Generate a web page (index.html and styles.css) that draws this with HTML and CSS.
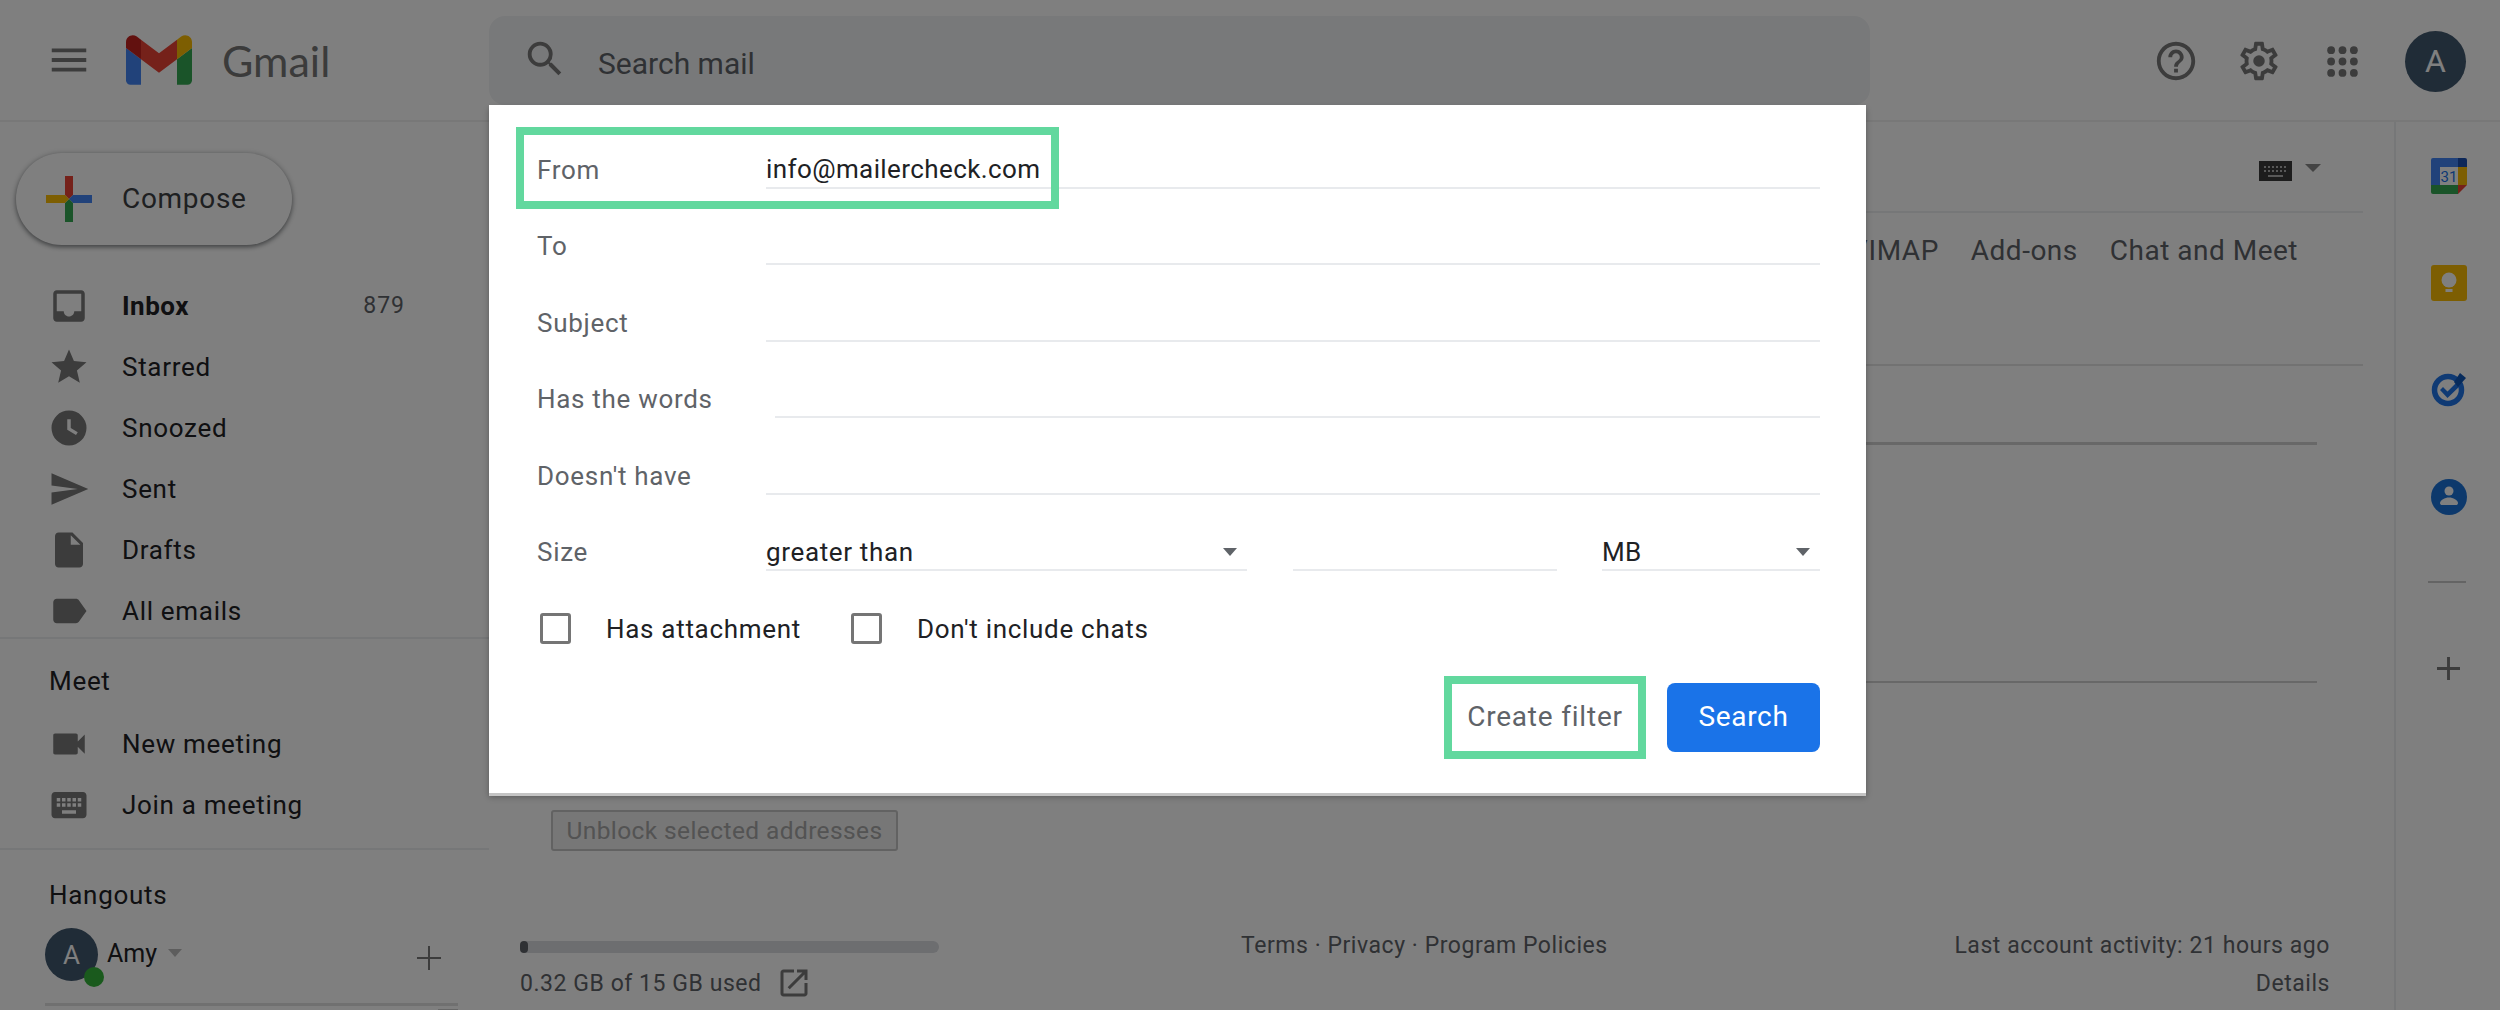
FILE: index.html
```html
<!DOCTYPE html>
<html lang="en">
<head>
<meta charset="utf-8">
<title>Gmail</title>
<link rel="stylesheet" href="styles.css">
</head>
<body>
<div class="app">
  <header class="topbar">
    <div class="brand">
      <svg class="ic ic-menu" viewBox="0 0 24 24"><path d="M3 18h18v-2H3v2zm0-5h18v-2H3v2zm0-7v2h18V6H3z"/></svg>
      <svg class="logo" viewBox="52 42 88 66"><path fill="#4285f4" d="M58 108h14V74L52 59v43c0 3.32 2.69 6 6 6"/><path fill="#34a853" d="M120 108h14c3.32 0 6-2.69 6-6V59l-20 15"/><path fill="#fbbc04" d="M120 48v26l20-15v-8c0-7.42-8.47-11.65-14.4-7.2"/><path fill="#ea4335" d="M72 74V48l24 18 24-18v26L96 92"/><path fill="#c5221f" d="M52 51v8l20 15V48l-5.6-4.2c-5.94-4.45-14.4-.22-14.4 7.2"/></svg>
      <span class="wordmark">Gmail</span>
    </div>
    <div class="searchbar">
      <svg class="ic ic-search" viewBox="0 0 24 24"><path d="M15.5 14h-.79l-.28-.27A6.471 6.471 0 0 0 16 9.5 6.5 6.5 0 1 0 9.5 16c1.61 0 3.09-.59 4.23-1.57l.27.28v.79l5 4.99L20.49 19l-4.99-5zm-6 0C7.01 14 5 11.99 5 9.5S7.01 5 9.5 5 14 7.01 14 9.5 11.99 14 9.5 14z"/></svg>
      <span>Search mail</span>
    </div>
    <div class="top-actions">
      <svg class="ic ic-top" viewBox="0 0 24 24"><path d="M11 18h2v-2h-2v2zm1-16C6.48 2 2 6.48 2 12s4.48 10 10 10 10-4.48 10-10S17.52 2 12 2zm0 18c-4.41 0-8-3.59-8-8s3.59-8 8-8 8 3.59 8 8-3.59 8-8 8zm0-14c-2.21 0-4 1.79-4 4h2c0-1.1.9-2 2-2s2 .9 2 2c0 2-3 1.75-3 5h2c0-2.25 3-2.5 3-5 0-2.21-1.79-4-4-4z"/></svg>
      <svg class="ic ic-top" viewBox="0 0 24 24"><path d="M19.43 12.98c.04-.32.07-.64.07-.98 0-.34-.03-.66-.07-.98l2.11-1.65c.19-.15.24-.42.12-.64l-2-3.46c-.09-.16-.26-.25-.44-.25-.06 0-.12.01-.17.03l-2.49 1c-.52-.4-1.08-.73-1.69-.98l-.38-2.65C14.46 2.18 14.25 2 14 2h-4c-.25 0-.46.18-.49.42l-.38 2.65c-.61.25-1.17.59-1.69.98l-2.49-1c-.06-.02-.12-.03-.18-.03-.17 0-.34.09-.43.25l-2 3.46c-.13.22-.07.49.12.64l2.11 1.65c-.04.32-.07.65-.07.98 0 .33.03.66.07.98l-2.11 1.65c-.19.15-.24.42-.12.64l2 3.46c.09.16.26.25.44.25.06 0 .12-.01.17-.03l2.49-1c.52.4 1.08.73 1.69.98l.38 2.65c.03.24.24.42.49.42h4c.25 0 .46-.18.49-.42l.38-2.65c.61-.25 1.17-.59 1.69-.98l2.49 1c.06.02.12.03.18.03.17 0 .34-.09.43-.25l2-3.46c.12-.22.07-.49-.12-.64l-2.11-1.65zm-1.98-1.71c.04.31.05.52.05.73 0 .21-.02.43-.05.73l-.14 1.13.89.7 1.08.84-.7 1.21-1.27-.51-1.04-.42-.9.68c-.43.32-.84.56-1.25.73l-1.06.43-.16 1.13-.2 1.35h-1.4l-.19-1.35-.16-1.13-1.06-.43c-.43-.18-.83-.41-1.23-.71l-.91-.7-1.06.43-1.27.51-.7-1.21 1.08-.84.89-.7-.14-1.13c-.03-.31-.05-.54-.05-.74s.02-.43.05-.73l.14-1.13-.89-.7-1.08-.84.7-1.21 1.27.51 1.04.42.9-.68c.43-.32.84-.56 1.25-.73l1.06-.43.16-1.13.2-1.35h1.39l.19 1.35.16 1.13 1.06.43c.43.18.83.41 1.23.71l.91.7 1.06-.43 1.27-.51.7 1.21-1.07.85-.89.7.14 1.13z"/><circle cx="12" cy="12" r="3"/></svg>
      <svg class="ic ic-top" viewBox="0 0 24 24"><circle cx="5" cy="5" r="2.4"/><circle cx="12" cy="5" r="2.4"/><circle cx="19" cy="5" r="2.4"/><circle cx="5" cy="12" r="2.4"/><circle cx="12" cy="12" r="2.4"/><circle cx="19" cy="12" r="2.4"/><circle cx="5" cy="19" r="2.4"/><circle cx="12" cy="19" r="2.4"/><circle cx="19" cy="19" r="2.4"/></svg>
      <span class="avatar avatar-top">A</span>
    </div>
  </header>

  <div class="body-row">
    <aside class="sidebar">
      <button class="compose">
        <svg class="compose-plus" viewBox="0 0 46 46"><path fill="#ea4335" d="M19 0h8v19l-4 4-4-4z"/><path fill="#4285f4" d="M46 19v8H27l-4-4 4-4z"/><path fill="#34a853" d="M27 46h-8V27l4-4 4 4z"/><path fill="#fbbc04" d="M0 27v-8h19l4 4-4 4z"/></svg>
        <span class="compose-text">Compose</span>
      </button>
      <nav class="labels">
        <a class="nav-item nav-active"><svg class="ic ic-nav" viewBox="0 0 24 24"><path d="M19 3H5c-1.1 0-2 .9-2 2v14c0 1.1.9 2 2 2h14c1.1 0 2-.9 2-2V5c0-1.1-.9-2-2-2zm0 12h-4c0 1.66-1.34 3-3 3s-3-1.34-3-3H5V5h14v10z"/></svg><span class="nav-text">Inbox</span><span class="count">879</span></a>
        <a class="nav-item"><svg class="ic ic-nav" viewBox="0 0 24 24"><path d="M12 17.27L18.18 21l-1.64-7.03L22 9.24l-7.19-.61L12 2 9.19 8.63 2 9.24l5.46 4.73L5.82 21z"/></svg><span class="nav-text">Starred</span></a>
        <a class="nav-item"><svg class="ic ic-nav" viewBox="0 0 24 24"><path fill-rule="evenodd" d="M12 2a10 10 0 1 0 0 20 10 10 0 0 0 0-20zm-1 5h2v5l4 2.4-1 1.6-5-3z"/></svg><span class="nav-text">Snoozed</span></a>
        <a class="nav-item"><svg class="ic ic-nav" viewBox="0 0 24 24"><path d="M2.01 21L23 12 2.01 3 2 10l15 2-15 2z"/></svg><span class="nav-text">Sent</span></a>
        <a class="nav-item"><svg class="ic ic-nav" viewBox="0 0 24 24"><path d="M6 2c-1.1 0-1.99.9-1.99 2L4 20c0 1.1.89 2 1.99 2H18c1.1 0 2-.9 2-2V8l-6-6H6zm7 7V3.5L18.5 9H13z"/></svg><span class="nav-text">Drafts</span></a>
        <a class="nav-item"><svg class="ic ic-nav" viewBox="0 0 24 24"><path d="M17.63 5.84C17.27 5.33 16.67 5 16 5L5 5.01C3.9 5.01 3 5.9 3 7v10c0 1.1.9 1.99 2 1.99L16 19c.67 0 1.27-.33 1.63-.84L22 12l-4.37-6.16z"/></svg><span class="nav-text">All emails</span></a>
      </nav>
      <section class="meet">
        <div class="side-title">Meet</div>
        <a class="nav-item"><svg class="ic ic-nav" viewBox="0 0 24 24"><path d="M17 10.5V7c0-.55-.45-1-1-1H4c-.55 0-1 .45-1 1v10c0 .55.45 1 1 1h12c.55 0 1-.45 1-1v-3.5l4 4v-11l-4 4z"/></svg><span class="nav-text">New meeting</span></a>
        <a class="nav-item"><svg class="ic ic-nav" viewBox="0 0 24 24"><path d="M20 4.5H4c-1.1 0-1.99.9-1.99 2L2 17.5c0 1.1.9 2 2 2h16c1.1 0 2-.9 2-2v-11c0-1.1-.9-2-2-2zM11 8h2v2h-2V8zm0 3h2v2h-2v-2zM8 8h2v2H8V8zm0 3h2v2H8v-2zm-1 2H5v-2h2v2zm0-3H5V8h2v2zm9 7H8v-2h8v2zm0-4h-2v-2h2v2zm0-3h-2V8h2v2zm3 3h-2v-2h2v2zm0-3h-2V8h2v2z"/></svg><span class="nav-text">Join a meeting</span></a>
      </section>
      <section class="hangouts">
        <div class="side-title">Hangouts</div>
        <div class="chat-user">
          <span class="avatar avatar-side">A<i class="online"></i></span>
          <span class="chat-name">Amy</span>
          <i class="caret caret-light"></i>
          <svg class="ic ic-plus" viewBox="0 0 24 24"><path d="M13 0h-2v11H0v2h11v11h2V13h11v-2H13z"/></svg>
        </div>
        <div class="chat-list"><i class="thumb"></i></div>
      </section>
    </aside>

    <main class="content">
      <div class="toolbar">
        <svg class="kbd" viewBox="0 0 33 20"><path d="M0 0h33v20H0z"/><path fill="#fff" opacity=".6" d="M5 5h2v2H5zM9 5h2v2H9zM13 5h2v2h-2zM17 5h2v2h-2zM21 5h2v2h-2zM25 5h2v2h-2zM5 9h2v2H5zM9 9h2v2H9zM13 9h2v2h-2zM17 9h2v2h-2zM21 9h2v2h-2zM25 9h2v2h-2zM9 14h15v2H9z"/></svg>
        <i class="caret"></i>
      </div>
      <nav class="tabs">
        <span>POP/IMAP</span><span>Add-ons</span><span>Chat and Meet</span>
      </nav>
      <div class="rule-block"></div>
      <div class="rule-block rule-tall"></div>
      <button class="unblock">Unblock selected addresses</button>
      <footer class="page-foot">
        <div class="storage">
          <div class="meter"><i class="meter-fill"></i></div>
          <div class="storage-text">0.32 GB of 15 GB used
            <svg class="ic ic-open" viewBox="0 0 24 24"><path d="M19 19H5V5h7V3H5c-1.11 0-2 .9-2 2v14c0 1.1.89 2 2 2h14c1.1 0 2-.9 2-2v-7h-2v7zM14 3v2h3.59l-9.83 9.83 1.41 1.41L19 6.41V10h2V3h-7z"/></svg>
          </div>
        </div>
        <div class="terms">Terms · Privacy · Program Policies</div>
        <div class="activity"><div>Last account activity: 21 hours ago</div><div class="details">Details</div></div>
      </footer>
    </main>

    <aside class="rail">
      <svg class="app-ic app-cal" viewBox="0 0 36 36">
        <path fill="#fff" d="M9 9h18v18H9z"/>
        <path fill="#4285f4" d="M2 0h25v9H9v18H0V2a2 2 0 0 1 2-2z"/>
        <path fill="#1a4fb0" d="M27 0h7a2 2 0 0 1 2 2v7h-9z"/>
        <path fill="#fbbc04" d="M27 9h9v18h-9z"/>
        <path fill="#34a853" d="M0 27h27v9H2a2 2 0 0 1-2-2z"/>
        <path fill="#ea4335" d="M27 27h9l-9 9z"/>
        <text class="cal-num" x="18" y="24" text-anchor="middle">31</text>
      </svg>
      <svg class="app-ic app-keep" viewBox="0 0 36 36"><rect width="36" height="36" rx="3" fill="#fbbc04"/><circle cx="18" cy="15" r="7.5" fill="#fff"/><path fill="#fff" d="M14.5 17h7v5h-7zM14.5 24h7v3h-7z"/></svg>
      <svg class="app-ic app-tasks" viewBox="0 0 36 36"><circle cx="17" cy="18" r="13.5" fill="none" stroke="#1f74e8" stroke-width="5.500"/><path fill="#1f74e8" d="M9 18l3-3 4.500 4.500L28 8l3.500 3.500L16.500 26z"/><path fill="#0f56b8" d="M29 1l6 5-8 9-4-5z"/></svg>
      <svg class="app-ic app-contacts" viewBox="0 0 36 36"><circle cx="18" cy="18" r="18" fill="#1a73d8"/><circle cx="18" cy="12" r="4.5" fill="#fff"/><path fill="#fff" d="M9 24c0-3 5-5.5 9-5.5s9 2.500 9 5.500c0 1.500-1 2-2 2H11c-1 0-2-.5-2-2z"/></svg>
      <i class="rail-rule"></i>
      <svg class="ic rail-plus" viewBox="0 0 24 24"><path d="M13.500 0h-3v10.500H0v3h10.500V24h3V13.500H24v-3H13.500z"/></svg>
    </aside>
  </div>
</div>

<div class="scrim"></div>

<form class="dialog">
  <div class="row"><span class="lbl">From</span><span class="field">info@mailercheck.com</span></div>
  <div class="row"><span class="lbl">To</span><span class="field"></span></div>
  <div class="row"><span class="lbl">Subject</span><span class="field"></span></div>
  <div class="row"><span class="lbl lbl-wide">Has the words</span><span class="field"></span></div>
  <div class="row"><span class="lbl">Doesn't have</span><span class="field"></span></div>
  <div class="row">
    <span class="lbl">Size</span>
    <span class="field select select-size">greater than<i class="caret caret-dark"></i></span>
    <span class="field field-num"></span>
    <span class="field select select-unit">MB<i class="caret caret-dark"></i></span>
  </div>
  <div class="row row-checks">
    <label class="check"><i class="box"></i>Has attachment</label>
    <label class="check"><i class="box"></i>Don't include chats</label>
  </div>
  <div class="actions">
    <span class="btn-create"><span class="btn-label">Create filter</span></span>
    <span class="btn-search"><span class="btn-label">Search</span></span>
  </div>
  <div class="highlight"></div>
</form>
</body>
</html>
```

FILE: styles.css
```css
* { box-sizing: border-box; }
html, body { margin: 0; height: 100%; }
body { width: 2500px; height: 1010px; overflow: hidden; background: #fff; font-family: Roboto, "Liberation Sans", sans-serif; color: #202124; position: relative; }
.ic { fill: #787878; display: block; flex: none; }

.app { width: 2500px; height: 1010px; display: flex; flex-direction: column; }

/* top bar */
.topbar { height: 122px; flex: none; display: flex; border-bottom: 2px solid #f1f1f1; }
.brand { width: 489px; flex: none; display: flex; align-items: center; padding: 0 0 0 46px; }
.ic-menu { width: 46px; height: 46px; }
.logo { width: 66px; height: 50px; margin-left: 34px; }
.wordmark { font-family: Lato, sans-serif; font-size: 43px; color: #777; margin-left: 30px; }
.searchbar { width: 1381px; height: 89px; margin-top: 16px; background: #f1f3f4; border-radius: 16px; display: flex; align-items: center; padding: 0 0 0 33px; font-size: 30px; color: #5f6368; }
.ic-search { width: 46px; height: 46px; margin-right: 30px; margin-top: -4px; }
.searchbar span { margin-top: 6px; }
.top-actions { flex: 1; display: flex; align-items: center; padding: 2px 0 0 283px; }
.ic-top { width: 46px; height: 46px; margin-right: 37px; }
.ic-top:nth-child(3) { width: 39px; height: 39px; margin-left: 4px; margin-right: 43px; }
.avatar { display: flex; align-items: center; justify-content: center; border-radius: 50%; background: #41586e; color: #fff; position: relative; }
.avatar-top { width: 61px; height: 61px; font-size: 32px; }

/* layout */
.body-row { flex: 1; display: flex; min-height: 0; }
.sidebar { width: 489px; flex: none; padding-top: 31px; display: flex; flex-direction: column; }

.compose { width: 276px; height: 92px; margin-left: 16px; border: 0; border-radius: 46px; background: #fff; display: flex; align-items: center; padding: 0 0 0 30px; box-shadow: 0 2px 4px rgba(60,64,67,.5), 0 1px 6px rgba(60,64,67,.3); font: 400 28px Roboto, sans-serif; color: #3c4043; letter-spacing: .7px; flex: none; }
.compose-plus { width: 46px; height: 46px; margin-right: 30px; flex: none; }
.compose-text { margin-top: -2px; }

.labels { height: 394px; padding-top: 30px; overflow: hidden; border-bottom: 2px solid #eceff0; flex: none; }
.nav-item { height: 61px; display: flex; align-items: center; font-size: 26px; letter-spacing: .7px; color: #202124; padding-left: 48px; }
.ic-nav { width: 42px; height: 42px; margin-right: 32px; }
.nav-active { font-weight: 700; letter-spacing: .5px; }
.nav-text { flex: 1; }
.count { font-weight: 400; font-size: 23px; color: #5f6368; margin-right: 84px; letter-spacing: 1px; }

.side-title { font-size: 26px; letter-spacing: .7px; color: #202124; padding-left: 49px; }
.meet { height: 211px; flex: none; padding-top: 26px; border-bottom: 2px solid #eceff0; }
.meet .side-title { height: 48px; line-height: 32px; }
.hangouts { padding-top: 29px; }
.hangouts .side-title { height: 49px; line-height: 32px; }
.chat-user { display: flex; align-items: center; padding-left: 45px; height: 53px; }
.avatar-side { width: 53px; height: 53px; font-size: 26px; flex: none; }
.online { position: absolute; left: 39px; top: 39px; width: 20px; height: 20px; border-radius: 50%; background: #34b53a; }
.chat-name { font-size: 25px; margin-left: 9px; margin-top: -2px; }
.caret { display: block; width: 0; height: 0; border-left: 8px solid transparent; border-right: 8px solid transparent; border-top: 8px solid #888; }
.caret-light { margin-left: 11px; margin-top: -3px; border-top-color: #bbb; border-left-width: 7px; border-right-width: 7px; }
.ic-plus { width: 24px; height: 24px; margin-left: 235px; margin-top: 6px; }
.chat-list { margin: 22px 31px 0 45px; height: 8px; border-top: 3px solid #e0e0e0; display: flex; justify-content: flex-end; }
.thumb { width: 20px; height: 8px; margin-top: 3px; background: #ccc; display: block; }

/* main */
.content { flex: 1; min-width: 0; display: flex; flex-direction: column; overflow: hidden; }
.toolbar { height: 91px; flex: none; margin-right: 31px; border-bottom: 2px solid #eceff0; display: flex; justify-content: flex-end; align-items: flex-start; padding: 39px 42px 0 0; }
.kbd { width: 33px; height: 20px; fill: #3a3a3a; }
.toolbar .caret { margin-left: 13px; margin-top: 3px; }
.tabs { height: 153px; flex: none; margin-right: 31px; border-bottom: 2px solid #e4e4e4; display: flex; justify-content: flex-end; gap: 32px; padding: 20px 65px 0 0; font-size: 28px; letter-spacing: .5px; color: #5f6368; white-space: nowrap; line-height: 36px; }
.rule-block { height: 79px; flex: none; margin-right: 77px; border-bottom: 3px solid #d0d0d0; }
.rule-tall { height: 238px; border-bottom-width: 2px; }
.unblock { align-self: flex-start; margin: 127px 0 0 62px; height: 41px; width: 347px; padding: 0; border: 2px solid #c4c4c4; border-radius: 3px; background: #efefef; color: #a6a6a6; font: 24.500px Roboto, sans-serif; letter-spacing: .4px; flex: none; }
.page-foot { flex: 1; display: flex; padding: 90px 64px 0 31px; font-size: 23px; letter-spacing: .55px; color: #5f6368; position: relative; }
.storage { width: 721px; flex: none; }
.meter { width: 419px; height: 12px; background: #dadce0; border-radius: 6px; }
.meter-fill { display: block; width: 8px; height: 12px; background: #5f6368; border-radius: 4px; }
.storage-text { display: flex; align-items: center; gap: 14px; margin-top: 12px; height: 36px; }
.ic-open { width: 36px; height: 36px; }
.terms { flex: 1; line-height: 32px; margin-top: -11px; }
.activity { text-align: right; line-height: 38px; margin-top: -14px; }

/* right rail */
.rail { width: 106px; flex: none; border-left: 2px solid #eceff0; display: flex; flex-direction: column; align-items: flex-start; padding: 36px 0 0 35px; }
.app-ic { display: block; width: 36px; height: 36px; flex: none; }
.app-keep { margin-top: 71px; }
.app-tasks { margin-top: 71px; }
.app-contacts { margin-top: 71px; }
.cal-num { font: 400 15px Roboto, sans-serif; fill: #1a73e8; }
.rail-rule { display: block; width: 38px; height: 2px; background: #c8c8c8; margin-top: 66px; margin-left: -3px; }
.rail-plus { width: 23px; height: 23px; margin-top: 74px; margin-left: 6px; }

/* scrim + dialog */
.scrim { position: absolute; inset: 0; background: rgba(0,0,0,.5); }
.dialog { position: absolute; left: 489px; top: 105px; width: 1377px; height: 688px; background: #fff; padding: 7px 46px 0 48px; box-shadow: 0 3px 0 #c4c4c4, 0 4px 6px rgba(0,0,0,.3); margin: 0; }
.row { height: 76.500px; display: flex; align-items: flex-end; font-size: 26px; letter-spacing: .7px; }
.lbl { width: 229px; flex: none; color: #5f6368; height: 38px; line-height: 38px; }
.lbl-wide { width: 238px; }
.field { flex: 1; height: 39px; line-height: 38px; border-bottom: 2px solid #e8eaed; color: #202124; position: relative; white-space: nowrap; letter-spacing: .4px; }
.select-size { flex: none; width: 481px; letter-spacing: .65px; padding-top: 1px; }
.field-num { flex: none; width: 264px; margin-left: 46px; }
.select-unit { flex: none; width: 218px; margin-left: 45px; padding-top: 1px; }
.caret-dark { position: absolute; right: 10px; top: 16px; border-left-width: 7.500px; border-right-width: 7.500px; border-top-color: #5f6368; }
.row-checks { padding-left: 3px; gap: 50px; }
.check { display: flex; align-items: center; height: 38px; gap: 35px; color: #202124; }
.box { display: block; width: 31px; height: 31px; border: 3.500px solid #757575; border-radius: 3px; }
.actions { display: flex; justify-content: flex-end; align-items: center; gap: 21px; margin-top: 28px; height: 83px; }
.btn-create { width: 202px; height: 83px; border: 8px solid #62d89e; display: flex; align-items: center; justify-content: center; font-size: 28px; letter-spacing: .8px; color: #5f6368; }
.btn-search { width: 153px; height: 69px; background: #1a73e8; border-radius: 8px; color: #fff; display: flex; align-items: center; justify-content: center; font-size: 28px; letter-spacing: .7px; }
.btn-label { margin-top: -2px; }
.highlight { position: absolute; left: 27px; top: 22px; width: 543px; height: 82px; border: 8px solid #62d89e; }
```
